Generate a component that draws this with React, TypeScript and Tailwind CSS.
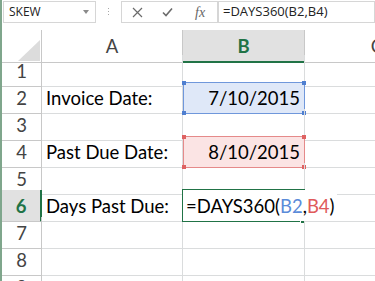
import React from 'react';

type Sel = 'blue' | 'red' | 'active';
type Row = { n: number; a?: string; b?: string; sel?: Sel };

const rows: Row[] = [
  { n: 1 },
  { n: 2, a: 'Invoice Date:', b: '7/10/2015', sel: 'blue' },
  { n: 3 },
  { n: 4, a: 'Past Due Date:', b: '8/10/2015', sel: 'red' },
  { n: 5 },
  { n: 6, a: 'Days Past Due:', sel: 'active' },
  { n: 7 },
  { n: 8 },
  { n: 9 },
];

const cellFont = { fontFamily: 'Lato, "Open Sans", sans-serif' };

const Handles = ({ color }: { color: string }) => (
  <>
    <span className={`absolute -left-[2px] -top-[2px] h-[4px] w-[4px] ${color}`} />
    <span className={`absolute -right-[2px] -top-[2px] h-[4px] w-[4px] ${color}`} />
    <span className={`absolute -bottom-[2px] -left-[2px] h-[4px] w-[4px] ${color}`} />
    <span className={`absolute -bottom-[2px] -right-[2px] h-[4px] w-[4px] ${color}`} />
  </>
);

const CellB = ({ row }: { row: Row }) => {
  if (row.sel === 'active') {
    return (
      <div className="relative border-b border-[#dadcdd]">
        <div className="absolute -left-px -top-px -bottom-px right-0 border-2 border-r-0 border-[#217346]" />
        <span className="absolute -bottom-[3px] right-0 h-[5px] w-[5px] border border-white bg-[#217346]" />
        <div className="relative z-10 flex h-full w-max items-center whitespace-nowrap bg-white pl-[3px] pr-[2px] pt-[3px] text-[18.5px] text-black">
          =DAYS360(<span className="text-[#5b8bd9]">B2</span>,<span className="text-[#e05a5a]">B4</span>)
        </div>
      </div>
    );
  }
  return (
    <div className="relative border-b border-r border-[#dadcdd]">
      {row.sel === 'blue' && (
        <div className="absolute -bottom-px -right-px left-0 top-0 border border-[#6f97db] bg-[#dfe8f8]">
          <Handles color="bg-[#4f7fd0]" />
        </div>
      )}
      {row.sel === 'red' && (
        <div className="absolute -bottom-px -right-px left-0 top-0 border border-[#e58a8a] bg-[#fbe4e4]">
          <Handles color="bg-[#de6262]" />
        </div>
      )}
      {row.b && (
        <div className="relative flex h-full items-center justify-end pr-[4px] pt-[3px] text-[18.5px] text-black">
          {row.b}
        </div>
      )}
    </div>
  );
};

export default function App() {
  return (
    <div className="relative h-[281px] w-[375px] overflow-hidden border-l-2 border-[#7fa68c] bg-white" style={cellFont}>
      {/* toolbar */}
      <div className="flex h-[30px] items-start pt-px" style={{ fontFamily: '"Open Sans", "Noto Sans", sans-serif' }}>
        <div className="ml-px flex h-[22px] w-[93px] items-center justify-between border border-[#d6d6d6] pl-[5px] pr-[6px]">
          <span className="text-[12px] text-[#222]">SKEW</span>
          <svg width="6" height="4" viewBox="0 0 6 4"><path d="M0 0h6L3 4z" fill="#8a8a8a" /></svg>
        </div>
        <div className="flex w-[25px] flex-col items-center gap-[2px] pt-[7px]">
          <span className="h-px w-px bg-[#a8a8a8]" />
          <span className="h-px w-px bg-[#a8a8a8]" />
          <span className="h-px w-px bg-[#a8a8a8]" />
        </div>
        <div className="flex h-[22px] w-[97px] items-center border border-[#d6d6d6]">
          <svg className="ml-[10px]" width="11" height="11" viewBox="0 0 11 11">
            <path d="M1 1l9 9M10 1l-9 9" stroke="#6b6b6b" strokeWidth="1.2" />
          </svg>
          <svg className="ml-[19px]" width="11" height="10" viewBox="0 0 11 10">
            <path d="M1 5.5l3 3L10 1.5" stroke="#6b6b6b" strokeWidth="1.6" fill="none" />
          </svg>
          <span className="ml-[22px] text-[14px] italic text-[#666]" style={{ fontFamily: '"Liberation Serif", serif' }}>fx</span>
        </div>
        <div className="flex h-[22px] flex-1 items-center border border-[#d6d6d6] pl-[4px] text-[13px] text-[#222]">
          =DAYS360(B2,B4)
        </div>
      </div>

      {/* column headers */}
      <div className="grid h-[25px] grid-cols-[40px_141px_122px_1fr] text-[18.5px] text-[#444]">
        <div className="relative border-b border-r border-[#c8c8c8]">
          <svg className="absolute bottom-[1px] right-[1px]" width="22" height="21" viewBox="0 0 22 21">
            <path d="M22 0V21H0z" fill="#dcdcdc" />
          </svg>
        </div>
        <div className="flex items-center justify-center border-b border-r border-[#c8c8c8] pt-[2px]">A</div>
        <div className="flex items-center justify-center border-b-2 border-r border-b-[#217346] border-r-[#c8c8c8] bg-[#e1e1e1] pt-[3px] font-bold text-[#217346]">B</div>
        <div className="flex items-center justify-end border-b border-[#c8c8c8] pt-[2px]">
          <span className="-mr-[8px]">C</span>
        </div>
      </div>

      {/* rows */}
      {rows.map((row) => (
        <div key={row.n} className="grid h-[27px] grid-cols-[40px_141px_122px_1fr]">
          {row.sel === 'active' ? (
            <div className="flex items-center justify-center border-b border-r-2 border-b-[#c8c8c8] border-r-[#217346] bg-[#e1e1e1] pt-[3px] text-[18.5px] font-bold text-[#217346]">
              {row.n}
            </div>
          ) : (
            <div className="flex items-center justify-center border-b border-r border-[#c8c8c8] pt-[3px] text-[18.5px] text-[#444]">
              {row.n}
            </div>
          )}
          <div className="flex items-center whitespace-nowrap border-b border-r border-[#dadcdd] pl-[4px] pt-[3px] text-[18.5px] text-black">
            {row.a}
          </div>
          <CellB row={row} />
          <div className="border-b border-[#dadcdd]" />
        </div>
      ))}
    </div>
  );
}
